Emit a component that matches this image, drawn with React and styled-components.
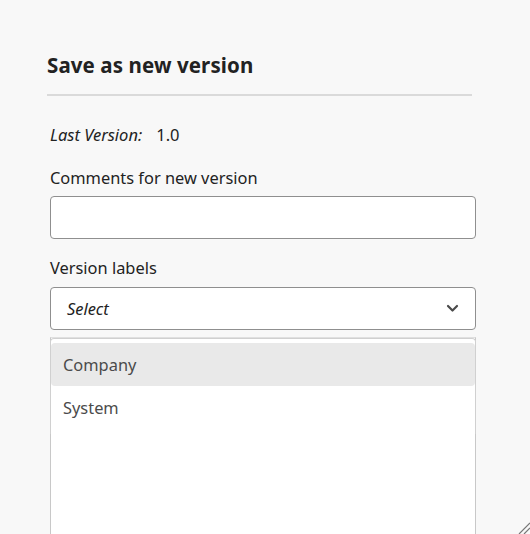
import React from "react";
import styled, { createGlobalStyle } from "styled-components";

const Global = createGlobalStyle`
  html, body { margin: 0; padding: 0; background: #f8f8f8; }
  body { font-family: "Noto Sans", "Open Sans", sans-serif; color: #222; }
  * { box-sizing: border-box; }
`;

const Page = styled.div`
  width: 530px;
  height: 534px;
  overflow: hidden;
  position: relative;
  background: #f8f8f8;
`;

const Dialog = styled.div`
  display: flex;
  flex-direction: column;
  padding: 51px 55px 0 47px;
`;

const Title = styled.h2`
  margin: 0;
  font-size: 20.5px;
  font-weight: 700;
  line-height: 28px;
  color: #222;
  letter-spacing: 0.1px;
`;

const Divider = styled.hr`
  margin: 15px 0 0 0;
  border: 0;
  height: 2px;
  background: #dadada;
  width: 425px;
`;

const Body = styled.div`
  display: flex;
  flex-direction: column;
  padding: 0 0 0 3px;
`;

const MetaRow = styled.div`
  display: flex;
  gap: 14px;
  margin-top: 28px;
  font-size: 16.5px;
  line-height: 22px;
`;

const MetaLabel = styled.span`
  font-style: italic;
`;

const FieldLabel = styled.label`
  display: block;
  font-size: 16.4px;
  line-height: 22px;
  color: #222;
  margin-top: ${(p) => p.$top}px;
`;

const TextInput = styled.div`
  margin-top: 7px;
  width: 426px;
  height: 43px;
  background: #fff;
  border: 1px solid #8f8f8f;
  border-radius: 4px;
`;

const SelectBox = styled.div`
  margin-top: 8px;
  width: 426px;
  height: 43px;
  background: #fff;
  border: 1px solid #8f8f8f;
  border-radius: 4px;
  display: flex;
  align-items: center;
  justify-content: space-between;
  padding: 0 16px 0 16px;
  font-size: 16.4px;
  font-style: italic;
  color: #222;
`;

const DropArea = styled.div`
  position: relative;
  margin-top: 7px;
  width: 426px;
  height: 220px;
`;

const BackSheet = styled.div`
  position: absolute;
  inset: 0 0 0 0;
  background: #fff;
  border-left: 1px solid #c8c8c8;
  border-right: 1px solid #c8c8c8;
  border-top: 1px solid #e0e0e0;
`;

const Popover = styled.div`
  position: absolute;
  left: 0;
  top: 1px;
  width: 426px;
  height: 96px;
  background: #fff;
  border: 1px solid #d0d0d0;
  border-bottom: 0;
  border-radius: 4px 4px 0 0;
  padding: 4px 0 0 0;
  display: flex;
  flex-direction: column;
`;

const Option = styled.div`
  height: 43px;
  display: flex;
  align-items: center;
  padding: 0 12px;
  font-size: 16.4px;
  color: #4b4b4b;
  border-radius: 4px;
  background: ${(p) => (p.$active ? "#e9e9e9" : "transparent")};
`;

const Grip = styled.svg`
  position: absolute;
  right: 0;
  bottom: 0;
`;

const Chevron = () => (
  <svg width="13" height="9" viewBox="0 0 13 9">
    <path d="M2 2 L6.5 6.5 L11 2" fill="none" stroke="#4a4a4a" strokeWidth="2.2" strokeLinecap="round" strokeLinejoin="round" />
  </svg>
);

export default function App() {
  return (
    <Page>
      <Global />
      <Dialog>
        <Title>Save as new version</Title>
        <Divider />
        <Body>
          <MetaRow>
            <MetaLabel>Last Version:</MetaLabel>
            <span>1.0</span>
          </MetaRow>
          <FieldLabel $top={21}>Comments for new version</FieldLabel>
          <TextInput />
          <FieldLabel $top={18}>Version labels</FieldLabel>
          <SelectBox>
            <span>Select</span>
            <Chevron />
          </SelectBox>
          <DropArea>
            <BackSheet />
            <Popover>
              <Option $active>Company</Option>
              <Option>System</Option>
            </Popover>
          </DropArea>
        </Body>
      </Dialog>
      <Grip width="14" height="14" viewBox="0 0 14 14">
        <path d="M3 14 L14 3 M8 14 L14 8" stroke="#777" strokeWidth="1.2" />
      </Grip>
    </Page>
  );
}
